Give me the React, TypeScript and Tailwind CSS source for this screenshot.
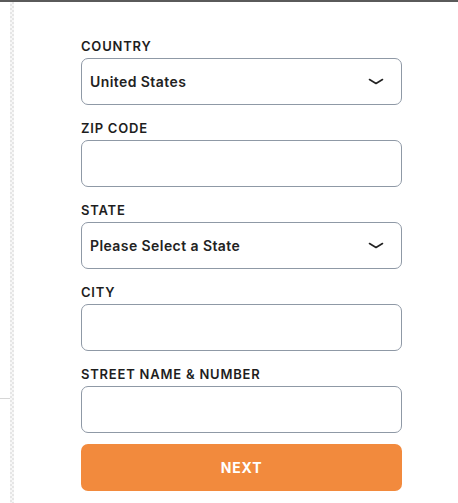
import React from 'react';

const font = { fontFamily: 'Inter, "Noto Sans", sans-serif' };

const Chevron = () => (
  <svg width="16" height="8" viewBox="0 0 16 8" className="text-[#222]">
    <path d="M1.5 1.5 L8 5.5 L14.5 1.5" fill="none" stroke="currentColor" strokeWidth="1.6" strokeLinecap="round" strokeLinejoin="round" />
  </svg>
);

const Field = ({ label, value, select }: { label: string; value?: string; select?: boolean }) => (
  <div className="flex flex-col">
    <label className="text-[13px] leading-4 font-semibold text-[#1e1e1e] tracking-[0.06em] mb-[4px]">{label}</label>
    <div className="h-[47px] w-[321px] rounded-[7px] border border-[#8f99a6] bg-white flex items-center justify-between pl-[8px] pr-[17px]">
      <span className="text-[14px] font-semibold text-[#222] tracking-[0.03em]">{value}</span>
      {select && <Chevron />}
    </div>
  </div>
);

const App: React.FC = () => {
  return (
    <div className="w-[458px] h-[503px] bg-white overflow-hidden" style={font}>
      <div className="h-[2px] bg-[#5a5a5a]" />
      <div className="flex h-[501px]">
        <div className="w-[10px]">
          <div className="mt-[396px] h-px bg-[#d6d6d6]" />
        </div>
        <div className="w-[4px] bg-[repeating-conic-gradient(#e6e6e6_0_25%,#f7f7f7_0_50%)] bg-[length:4px_4px]" />
        <div className="flex flex-col gap-[15px] pl-[67px] pt-[36px]">
          <Field label="COUNTRY" value="United States" select />
          <Field label="ZIP CODE" />
          <Field label="STATE" value="Please Select a State" select />
          <Field label="CITY" />
          <Field label="STREET NAME & NUMBER" />
          <button className="-mt-[4px] h-[47px] w-[321px] rounded-[7px] bg-[#f28a3d] text-white text-[14px] font-bold tracking-[0.06em]">
            NEXT
          </button>
        </div>
      </div>
    </div>
  );
};

export default App;
